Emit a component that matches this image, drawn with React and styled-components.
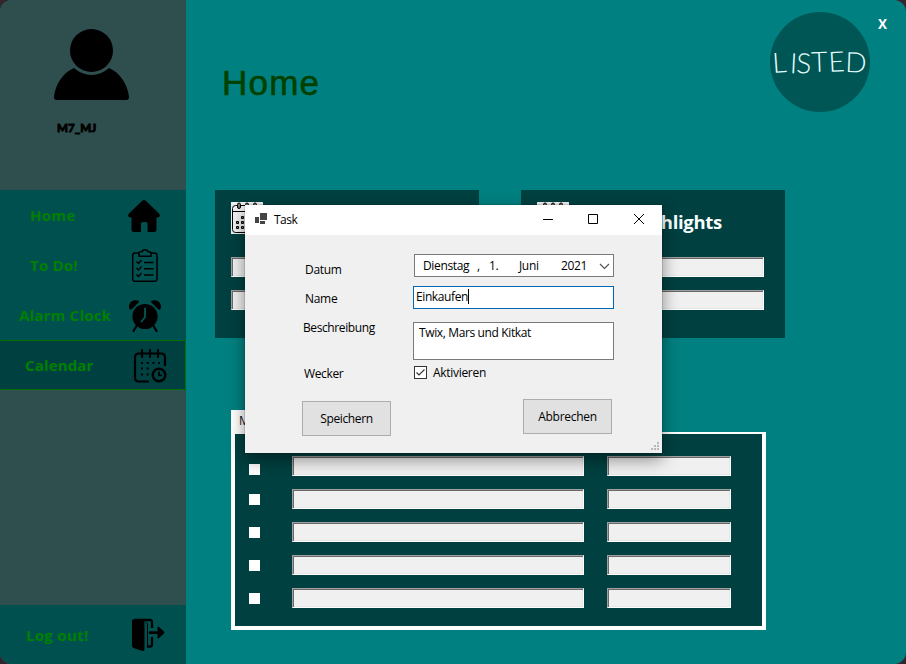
import React from "react";
import styled, { createGlobalStyle } from "styled-components";

const GlobalStyle = createGlobalStyle`
  * { box-sizing: border-box; }
  body { margin: 0; background: #33262c; overflow: hidden; }
`;

const ui = `"Open Sans", "Noto Sans", sans-serif`;

const AppWindow = styled.div`
  position: relative;
  display: flex;
  width: 906px;
  height: 664px;
  border-radius: 12px;
  overflow: hidden;
  background: #008080;
  font-family: ${ui};
`;

const Sidebar = styled.aside`
  display: flex;
  flex-direction: column;
  width: 186px;
  background: #2f4f4f;
`;

const Profile = styled.div`
  height: 190px;
  padding: 28px 0 0 53px;
`;

const Avatar = styled.svg`
  display: block;
  width: 77px;
  height: 73px;
`;

const UserName = styled.div`
  margin: 19px 0 0 4px;
  font: 900 11.5px/16px Lato, sans-serif;
  -webkit-text-stroke: 0.8px #000;
  letter-spacing: 0.1px;
  color: #000;
`;

const NavItem = styled.button`
  display: flex;
  align-items: center;
  width: 186px;
  height: ${(p) => p.$height || 50}px;
  padding: 0 0 0 ${(p) => p.$indent}px;
  border: 0;
  background: #005050;
  color: #008000;
  font: 700 15px/20px ${ui};
  letter-spacing: ${(p) => p.$spacing || 0}px;
  text-align: left;
  white-space: nowrap;
  ${(p) =>
    p.$active &&
    `background: #004040;
     padding-left: ${p.$indent - 1}px;
     border: 1px solid #007000;
     border-left-color: #004040;`}
`;

const NavLabel = styled.span`
  width: ${(p) => p.$width}px;
`;

const NavIcon = styled.svg`
  flex: none;
  display: block;
  width: 36px;
  height: 36px;
  margin-top: 1px;
  overflow: visible;
`;

const Spacer = styled.div`
  flex: 1;
`;

const Main = styled.main`
  display: flex;
  flex-direction: column;
  width: 720px;
`;

const Header = styled.header`
  display: flex;
  align-items: flex-start;
  height: 190px;
  padding-left: 36px;
`;

const Title = styled.h1`
  width: 548px;
  margin: 62px 0 0;
  font: 400 35px/42px "Liberation Sans", sans-serif;
  letter-spacing: 1.2px;
  -webkit-text-stroke: 0.6px #004000;
  color: #004000;
`;

const Logo = styled.svg`
  display: block;
  width: 100px;
  height: 100px;
  margin-top: 12px;
`;

const CloseApp = styled.button`
  margin: 14px 0 0 8px;
  padding: 0;
  border: 0;
  background: none;
  color: #fff;
  font: 700 13.5px/20px ${ui};
`;

const Cards = styled.section`
  display: flex;
  gap: 42px;
  padding-left: 29px;
`;

const Card = styled.div`
  width: 264px;
  height: 148px;
  padding: 12px 21px 0 16px;
  background: #004040;
`;

const CardHead = styled.div`
  display: flex;
  justify-content: space-between;
  height: 55px;
`;

const CardIcon = styled.svg`
  width: 32px;
  height: 32px;
  background: #f2f2f2;
`;

const CardTitle = styled.h2`
  margin: 6px 42px 0 0;
  font: 700 18.5px/28px ${ui};
  letter-spacing: -0.3px;
  color: #f8ffff;
`;

const Field = styled.div`
  width: ${(p) => p.$width}px;
  height: 20px;
  border: 1px solid;
  border-color: #a0a0a0 #fff #fff #a0a0a0;
  box-shadow: inset 1px 1px 0 #696969, inset -1px -1px 0 #e3e9e9;
  background: #f0f0f0;
`;

const FieldStack = styled.div`
  display: grid;
  gap: 13px;
`;

const TaskTabs = styled.section`
  width: 535px;
  margin: 72px 0 0 45px;
`;

const Tab = styled.div`
  width: 70px;
  height: 22px;
  padding-left: 8px;
  background: #fff;
  color: #111;
  font: 400 12px/22px ${ui};
`;

const TabPage = styled.div`
  height: 198px;
  padding: 22px 0 0 14px;
  border: solid #fff;
  border-width: 2px 4px 4px;
  background: #004040;
`;

const TaskRow = styled.div`
  display: grid;
  grid-template-columns: 43px 315px 124px;
  height: 33px;
`;

const Tick = styled.span`
  width: 11px;
  height: 11px;
  margin-top: ${(p) => p.$top}px;
  background: #fff;
`;

const Dialog = styled.div`
  position: absolute;
  left: 245px;
  top: 205px;
  width: 417px;
  height: 248px;
  background: #f0f0f0;
  box-shadow: 0 0 1px rgba(0, 0, 0, 0.6), 0 6px 16px rgba(0, 0, 0, 0.45);
  color: #000;
  font: 400 12px/16px ${ui};
`;

const TitleBar = styled.div`
  display: flex;
  align-items: center;
  height: 30px;
  padding-left: 10px;
  background: #fff;
`;

const AppIcon = styled.svg`
  flex: none;
  width: 13px;
  height: 12px;
  margin-top: -3px;
`;

const DialogTitle = styled.span`
  width: 263px;
  flex: none;
  padding-left: 6px;
  letter-spacing: -0.5px;
`;

const WindowButton = styled.svg`
  flex: none;
  width: ${(p) => p.$width || 45}px;
  height: 30px;
  stroke: #000;
  fill: none;
`;

const FormRow = styled.div`
  display: flex;
  height: ${(p) => p.$height}px;
  margin-top: ${(p) => p.$gap}px;
`;

const Label = styled.label`
  width: ${(p) => (p.$end || 168) - p.$indent}px;
  margin: ${(p) => p.$top}px 0 0 ${(p) => p.$indent}px;
  white-space: nowrap;
  letter-spacing: ${(p) => p.$spacing || 0}px;
`;

const DatePicker = styled.div`
  display: grid;
  grid-template-columns: 54px 12px 30px 42px 38px 14px;
  width: 200px;
  padding: 3px 0 0 8px;
  border: 1px solid #7a7a7a;
  background: #fff;
  letter-spacing: -0.35px;
`;

const Chevron = styled.svg`
  width: 11px;
  height: 7px;
  margin: 5px 0 0;
  fill: none;
  stroke: #555;
  stroke-width: 1.2;
`;

const TextBox = styled.div`
  width: 201px;
  height: 100%;
  padding: ${(p) => (p.$focused ? "2px 2px" : "2px 5px")};
  border: 1px solid ${(p) => (p.$focused ? "#0067b5" : "#7a7a7a")};
  background: #fff;
  letter-spacing: ${(p) => p.$spacing}px;
`;

const Caret = styled.span`
  display: inline-block;
  width: 1px;
  height: 15px;
  vertical-align: top;
  background: #000;
`;

const CheckBox = styled.svg`
  flex: none;
  width: 13px;
  height: 13px;
`;

const CheckLabel = styled.span`
  margin: -1px 0 0 6px;
  letter-spacing: -0.3px;
`;

const Actions = styled.div`
  display: flex;
  justify-content: space-between;
  margin: 20px 50px 0 57px;
`;

const ActionButton = styled.button`
  width: 89px;
  height: 35px;
  margin-top: ${(p) => p.$top}px;
  padding: 0;
  border: 1px solid #adadad;
  background: #e1e1e1;
  color: #000;
  font: 400 12px/16px ${ui};
  letter-spacing: ${(p) => p.$spacing}px;
`;

const Grip = styled.svg`
  position: absolute;
  right: 2px;
  bottom: 2px;
  width: 9px;
  height: 9px;
  fill: #b8b8b8;
`;

const HomeIcon = () => (
  <NavIcon viewBox="0 0 36 36">
    <path d="M18 2Q19 2 20 3L33 15.500Q34.500 17 33.500 18.500Q33 19.500 31 19.500H30.500V31.500Q30.500 34 28 34H21.500V26Q21.500 24 19.500 24H17Q15 24 15 26V34H8Q5.500 34 5.500 31.500V19.500H5Q3 19.500 2.400 18.500Q1.500 17 3 15.500L16 3Q17 2 18 2Z" />
  </NavIcon>
);

const ClipboardIcon = () => (
  <NavIcon viewBox="0 0 36 36" fill="none" stroke="#000" strokeWidth="1.500">
    <path d="M13 5H9Q6.700 5 6.700 7.500V31Q6.700 33.300 9 33.300H28.500Q31 33.300 31 31V7.500Q31 5 28.500 5H25" />
    <path d="M13 8.300V5Q13 4 14.500 3.800H16Q16.500 1.700 19 1.700T22 3.800H23.500Q25 4 25 5V8.300Z" />
    <path d="M10.500 13.500L12.500 15.500L15.500 12M10.500 20L12.500 22L15.500 18.500M10.500 26.500L12.500 28.500L15.500 25M18 14.500H27.500M18 20.800H27.500M18 27H27.500" />
  </NavIcon>
);

const AlarmIcon = () => (
  <NavIcon viewBox="0 0 36 36">
    <circle cx="19" cy="18.500" r="12.600" />
    <path d="M3.600 11C1.500 5 7 .5 12.500 3Q13.300 4 11.500 5.500L5.500 11Q4.300 12 3.600 11ZM34.400 11C36.500 5 31 .5 25.500 3Q24.700 4 26.500 5.500L32.500 11Q33.700 12 34.400 11Z" />
    <path d="M4.500 10.500Q3 4.500 9 3.500H12L5.500 10.500ZM33.500 10.500Q35 4.500 29 3.500H26L32.500 10.500Z" stroke="#000" strokeWidth="1.500" strokeLinejoin="round" />
    <path d="M10.500 28L7.500 33M27.500 28L30.500 33" stroke="#000" strokeWidth="2.200" strokeLinecap="round" />
    <path d="M19 10.500V19L15.500 23.500" fill="none" stroke="#005050" strokeWidth="2" strokeLinecap="round" />
  </NavIcon>
);

const CalendarClockIcon = () => (
  <NavIcon viewBox="0 0 36 36" fill="none" stroke="#000" strokeWidth="2.200">
    <path d="M18 33.500H8Q4 33.500 4 29.500V9.500Q4 5.500 8 5.500H30Q34 5.500 34 9.500V18" />
    <path d="M11 2V9M19 2V9M27 2V9" strokeLinecap="round" />
    <path d="M10 15H29" strokeDasharray="2 3.700" />
    <path d="M10 20.500H18M10 26.500H18" strokeDasharray="2 3.700" />
    <circle cx="28" cy="27" r="6.300" strokeWidth="2.500" />
    <path d="M28 23.500V27.300H31" strokeWidth="1.800" />
  </NavIcon>
);

const LogoutIcon = () => (
  <NavIcon viewBox="0 0 36 36">
    <path d="M2.500 2.500L13 4Q14.500 4.500 14.500 6V32Q14.500 34.500 12.500 34L3.500 31Q2 30.500 2 28V3.500Q2 2.500 2.500 2.500Z" />
    <path d="M4 3H20Q22 3 22 5.500V11M22 20V27.500Q22 29.500 20 29.500H17" fill="none" stroke="#000" strokeWidth="2.300" />
    <path d="M15 4.500L17.500 7V29.500" fill="none" stroke="#000" strokeWidth="1" />
    <path d="M20 15.600H29" stroke="#000" strokeWidth="2.800" strokeLinecap="round" />
    <path d="M27.500 10Q28 9 29 10L34 14.600Q34.600 15.600 34 16.500L29 21Q28 22 27.500 21Z" />
  </NavIcon>
);

const MiniCalendar = () => (
  <CardIcon viewBox="0 0 32 32">
    <rect x="1.500" y="3.500" width="29" height="27" rx="3" fill="none" stroke="#000" />
    <path d="M1.500 9.500H30.500" stroke="#000" />
    <g fill="#777" stroke="#000">
      <rect x="6.500" y="1" width="3" height="5.500" rx="1.500" />
      <rect x="14.500" y="1" width="3" height="5.500" rx="1.500" />
      <rect x="22.500" y="1" width="3" height="5.500" rx="1.500" />
      <path d="M10.500 14.500h2v2h-2zM5.500 19.500h2v2h-2zM10.500 19.500h2v2h-2zM5.500 24.500h2v2h-2zM10.500 24.500h2v2h-2z" />
    </g>
  </CardIcon>
);

const tickTops = [8, 5, 5, 5, 5];

export default function App() {
  return (
    <>
      <GlobalStyle />
      <AppWindow>
        <Sidebar>
          <Profile>
            <Avatar viewBox="0 0 77 73">
              <circle cx="38.500" cy="22.500" r="21.500" />
              <path d="M21 40Q29 47 38.500 47T56 40C68 45 75 58 76 69Q76 72 73.500 72H3.500Q1 72 1 69C2 58 9 45 21 40Z" />
            </Avatar>
            <UserName>M7_MJ</UserName>
          </Profile>
          <NavItem $indent={30} $spacing={0.3}><NavLabel $width={96}>Home</NavLabel><HomeIcon /></NavItem>
          <NavItem $indent={30} $spacing={0.2}><NavLabel $width={96}>To Do!</NavLabel><ClipboardIcon /></NavItem>
          <NavItem $indent={19} $spacing={0.2}><NavLabel $width={107}>Alarm Clock</NavLabel><AlarmIcon /></NavItem>
          <NavItem $indent={25} $spacing={0.15} $active><NavLabel $width={106}>Calendar</NavLabel><CalendarClockIcon /></NavItem>
          <Spacer />
          <NavItem $indent={26} $spacing={0.3} $height={59}><NavLabel $width={104}>Log out!</NavLabel><LogoutIcon /></NavItem>
        </Sidebar>
        <Main>
          <Header>
            <Title>Home</Title>
            <Logo viewBox="0 0 100 100">
              <circle cx="50" cy="50" r="50" fill="#005555" />
              <text
                x="3 19.500 26 41.500 59 75"
                y="61 61 61 60 60 60"
                rotate="-4 3 2 -2 -3 2"
                fill="#e8ffff"
                fontFamily="Lato, sans-serif"
                fontWeight="300"
                fontSize="28"
              >
                LISTED
              </text>
            </Logo>
            <CloseApp>X</CloseApp>
          </Header>
          <Cards>
            <Card>
              <CardHead><MiniCalendar /></CardHead>
              <FieldStack><Field $width={227} /><Field $width={227} /></FieldStack>
            </Card>
            <Card>
              <CardHead><MiniCalendar /><CardTitle>Highlights</CardTitle></CardHead>
              <FieldStack><Field $width={227} /><Field $width={227} /></FieldStack>
            </Card>
          </Cards>
          <TaskTabs>
            <Tab>Montag</Tab>
            <TabPage>
              {tickTops.map((top, i) => (
                <TaskRow key={i}>
                  <Tick $top={top} />
                  <Field $width={292} />
                  <Field $width={124} />
                </TaskRow>
              ))}
            </TabPage>
          </TaskTabs>
        </Main>
        <Dialog>
          <TitleBar>
            <AppIcon viewBox="0 0 13 12" fill="#444">
              <path d="M5 0h7v7H5zM0 4h4v6H0zM5 8h5v3H5z" />
            </AppIcon>
            <DialogTitle>Task</DialogTitle>
            <WindowButton viewBox="0 0 45 30"><path d="M12 14.500H22" /></WindowButton>
            <WindowButton viewBox="0 0 45 30"><path d="M12.500 9.500h9v9h-9z" /></WindowButton>
            <WindowButton $width={40} viewBox="0 0 40 30"><path d="M13 9l10 10M23 9l-10 10" /></WindowButton>
          </TitleBar>
          <FormRow $gap={19} $height={23}>
            <Label $indent={60} $end={169} $top={8} $spacing={-0.3}>Datum</Label>
            <DatePicker>
              <span>Dienstag</span><span>,</span><span>1.</span><span>Juni</span><span>2021</span>
              <Chevron viewBox="0 0 11 7"><path d="M1 1l4.500 4.500L10 1" /></Chevron>
            </DatePicker>
          </FormRow>
          <FormRow $gap={9} $height={23}>
            <Label $indent={60} $top={5} $spacing={-0.3}>Name</Label>
            <TextBox $focused $spacing={-0.4}>Einkaufen<Caret /></TextBox>
          </FormRow>
          <FormRow $gap={13} $height={38}>
            <Label $indent={58} $top={-2} $spacing={-0.4}>Beschreibung</Label>
            <TextBox $spacing={-0.37}>Twix, Mars und Kitkat</TextBox>
          </FormRow>
          <FormRow $gap={6} $height={13}>
            <Label $indent={59} $end={169} $top={0} $spacing={-0.35}>Wecker</Label>
            <CheckBox viewBox="0 0 13 13">
              <rect x=".5" y=".5" width="12" height="12" fill="#fff" stroke="#333" />
              <path d="M2.500 6.500L5 9L10.500 3.500" fill="none" stroke="#333" strokeWidth="1.200" />
            </CheckBox>
            <CheckLabel>Aktivieren</CheckLabel>
          </FormRow>
          <Actions>
            <ActionButton $top={2} $spacing={-0.35}>Speichern</ActionButton>
            <ActionButton $top={0} $spacing={-0.3}>Abbrechen</ActionButton>
          </Actions>
          <Grip viewBox="0 0 9 9">
            <path d="M6 0h2v2H6zM3 3h2v2H3zM6 3h2v2H6zM0 6h2v2H0zM3 6h2v2H3zM6 6h2v2H6z" />
          </Grip>
        </Dialog>
      </AppWindow>
    </>
  );
}
